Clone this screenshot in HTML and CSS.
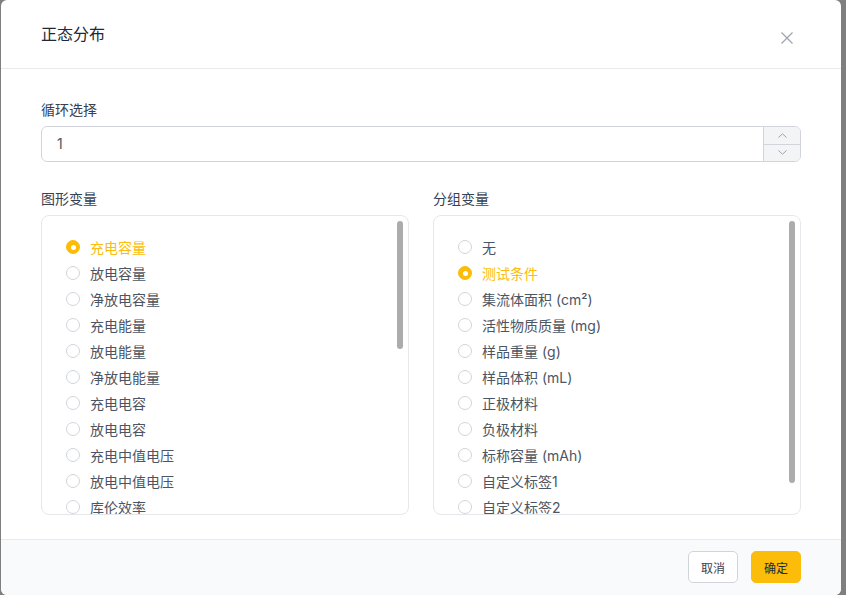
FILE: index.html
```html
<!DOCTYPE html>
<html lang="zh-CN">
<head>
<meta charset="utf-8">
<title>正态分布</title>
<link rel="stylesheet" href="styles.css">
</head>
<body>
<div class="dialog">
  <header class="dlg-head">
    <h2 class="dlg-title">正态分布</h2>
    <button class="close" aria-label="关闭">
      <svg width="12" height="12" viewBox="0 0 12 12"><path d="M0.5 0.5 L11.5 11.5 M11.5 0.5 L0.5 11.5" stroke="#9ca3af" stroke-width="1.2" fill="none"/></svg>
    </button>
  </header>
  <main class="dlg-body">
    <div class="field">
      <div class="lbl">循环选择</div>
      <div class="num-input">
        <span class="num-val">1</span>
        <div class="spin">
          <span class="spin-btn"><svg width="9" height="5" viewBox="0 0 9 5"><path d="M0.5 4.5 L4.5 0.8 L8.5 4.5" stroke="#9ca3af" stroke-width="1" fill="none"/></svg></span>
          <span class="spin-btn"><svg width="9" height="5" viewBox="0 0 9 5"><path d="M0.5 0.5 L4.5 4.2 L8.5 0.5" stroke="#9ca3af" stroke-width="1" fill="none"/></svg></span>
        </div>
      </div>
    </div>
    <div class="cols">
      <div class="col">
        <div class="lbl">图形变量</div>
        <div class="list-box">
          <ul class="list">
            <li class="item checked"><span class="radio"></span>充电容量</li>
            <li class="item"><span class="radio"></span>放电容量</li>
            <li class="item"><span class="radio"></span>净放电容量</li>
            <li class="item"><span class="radio"></span>充电能量</li>
            <li class="item"><span class="radio"></span>放电能量</li>
            <li class="item"><span class="radio"></span>净放电能量</li>
            <li class="item"><span class="radio"></span>充电电容</li>
            <li class="item"><span class="radio"></span>放电电容</li>
            <li class="item"><span class="radio"></span>充电中值电压</li>
            <li class="item"><span class="radio"></span>放电中值电压</li>
            <li class="item"><span class="radio"></span>库伦效率</li>
          </ul>
          <div class="thumb thumb-left"></div>
        </div>
      </div>
      <div class="col">
        <div class="lbl">分组变量</div>
        <div class="list-box">
          <ul class="list">
            <li class="item"><span class="radio"></span>无</li>
            <li class="item checked"><span class="radio"></span>测试条件</li>
            <li class="item"><span class="radio"></span>集流体面积 (cm²)</li>
            <li class="item"><span class="radio"></span>活性物质质量 (mg)</li>
            <li class="item"><span class="radio"></span>样品重量 (g)</li>
            <li class="item"><span class="radio"></span>样品体积 (mL)</li>
            <li class="item"><span class="radio"></span>正极材料</li>
            <li class="item"><span class="radio"></span>负极材料</li>
            <li class="item"><span class="radio"></span>标称容量 (mAh)</li>
            <li class="item"><span class="radio"></span>自定义标签1</li>
            <li class="item"><span class="radio"></span>自定义标签2</li>
          </ul>
          <div class="thumb thumb-right"></div>
        </div>
      </div>
    </div>
  </main>
  <footer class="dlg-foot">
    <button class="btn">取消</button>
    <button class="btn primary">确定</button>
  </footer>
</div>
</body>
</html>
```
FILE: styles.css
```css
* { box-sizing: border-box; }
html, body { margin: 0; padding: 0; }
body {
  background: #7f7f7f;
  width: 846px;
  height: 595px;
  overflow: hidden;
  font-family: Inter, "Noto Sans CJK SC", sans-serif;
  color: #374151;
}
.dialog {
  margin-left: 1px;
  width: 840px;
  height: 595px;
  background: #fff;
  border-radius: 6px;
  display: flex;
  flex-direction: column;
  overflow: hidden;
}
.dlg-head {
  height: 69px;
  flex: none;
  display: flex;
  align-items: center;
  justify-content: space-between;
  padding: 0 48px 0 40px;
  border-bottom: 1px solid #e8eaed;
}
.dlg-title {
  margin: 0;
  font-size: 16px;
  line-height: 24px;
  font-weight: 400;
  color: #1f2937;
}
.close {
  border: 0;
  background: none;
  padding: 0;
  width: 12px;
  height: 12px;
  margin-top: 8px;
  display: flex;
}
.dlg-body {
  flex: 1;
  padding: 31px 40px 0;
}
.lbl {
  font-size: 14px;
  line-height: 20px;
  color: #374151;
  margin-bottom: 6px;
}
.num-input {
  height: 36px;
  border: 1px solid #d1d5db;
  border-radius: 6px;
  display: flex;
  overflow: hidden;
}
.num-val {
  flex: 1;
  font-size: 14px;
  line-height: 34px;
  padding-left: 15px;
  color: #4b5563;
}
.spin {
  width: 37px;
  display: flex;
  flex-direction: column;
  border-left: 1px solid #d1d5db;
  background: #f3f4f6;
}
.spin-btn {
  flex: 1;
  display: flex;
  align-items: center;
  justify-content: center;
}
.spin-btn + .spin-btn { border-top: 1px solid #d1d5db; }
.cols {
  margin-top: 27px;
  display: grid;
  grid-template-columns: 1fr 1fr;
  gap: 24px;
}
.list-box {
  position: relative;
  height: 300px;
  border: 1px solid #e5e7eb;
  border-radius: 8px;
  overflow: hidden;
}
.list {
  list-style: none;
  margin: 0;
  padding: 18px 0 0 24px;
}
.item {
  height: 26px;
  display: flex;
  align-items: center;
  font-size: 14px;
  color: #4b5563;
  white-space: nowrap;
}
.radio {
  width: 14px;
  height: 14px;
  border: 1px solid #d1d5db;
  border-radius: 50%;
  margin-right: 10px;
  flex: none;
  background: #fff;
  display: flex;
  align-items: center;
  justify-content: center;
}
.item.checked { color: #fbbc0a; }
.item.checked .radio {
  background: #fbbc0a;
  border-color: #fbbc0a;
}
.item.checked .radio::after {
  content: "";
  width: 5px;
  height: 5px;
  border-radius: 50%;
  background: #fff;
}
.thumb {
  position: absolute;
  top: 5px;
  right: 5px;
  width: 6px;
  border-radius: 3px;
  background: #acacac;
}
.thumb-left { height: 128px; }
.thumb-right { height: 262px; }
.dlg-foot {
  flex: none;
  height: 56px;
  border-top: 1px solid #e8eaed;
  background: #f9fafb;
  display: flex;
  justify-content: flex-end;
  align-items: flex-start;
  gap: 13px;
  padding: 11px 40px 0;
}
.btn {
  height: 32px;
  padding: 0 12px;
  border-radius: 5px;
  border: 1px solid #d1d5db;
  background: #fff;
  font-family: Inter, "Noto Sans CJK SC", sans-serif;
  font-size: 12px;
  color: #374151;
}
.btn.primary {
  background: #fbbc0a;
  border-color: #fbbc0a;
  color: #1f2937;
}
```
